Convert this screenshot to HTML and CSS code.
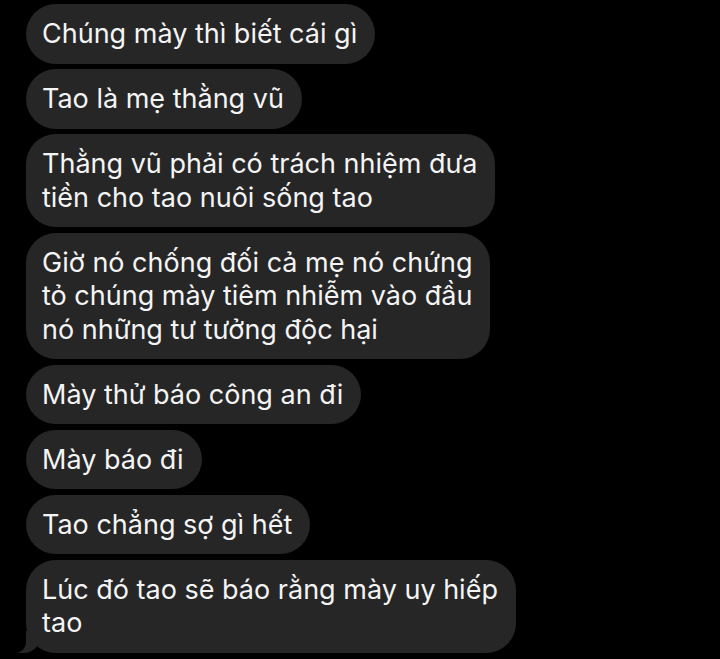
FILE: index.html
```
<html>
<head>
<meta http-equiv="Content-Type" content="text/html; charset=utf-8" />
<title>Tin nhắn</title>
<link rel="stylesheet" href="styles.css">
</head>
<body>
<section id="thread">
	<div class="msg">Chúng mày thì biết cái gì</div>
	<div class="msg">Tao là mẹ thằng vũ</div>
	<div class="msg">Thằng vũ phải có trách nhiệm đưa<br>tiền cho tao nuôi sống tao</div>
	<div class="msg">Giờ nó chống đối cả mẹ nó chứng<br>tỏ chúng mày tiêm nhiễm vào đầu<br>nó những tư tưởng độc hại</div>
	<div class="msg">Mày thử báo công an đi</div>
	<div class="msg">Mày báo đi</div>
	<div class="msg">Tao chẳng sợ gì hết</div>
	<div class="msg last">Lúc đó tao sẽ báo rằng mày uy hiếp<br>tao</div>
</section>
</body>
</html>
```
FILE: styles.css
```
html, body{
	margin:0;
	background:#000;
}
body{
	font-family:Inter, "Noto Sans", sans-serif;
	color:#f4f4f4;
}
#thread{
	display:flex;
	flex-direction:column;
	align-items:flex-start;
	gap:5.5px;
	padding:4px 0 0 26px;
}
.msg{
	position:relative;
	background:#262626;
	border-radius:30px;
	padding:13px 18px 13px 16px;
	font-size:27px;
	line-height:33.5px;
	white-space:nowrap;
}
.msg.last::before{
	content:"";
	position:absolute;
	left:-8px;
	bottom:0;
	width:22px;
	height:22px;
	background:#262626;
	border-bottom-right-radius:16px;
}
.msg.last::after{
	content:"";
	position:absolute;
	left:-12px;
	bottom:0;
	width:12px;
	height:22px;
	background:#000;
	border-bottom-right-radius:11px;
}
```
